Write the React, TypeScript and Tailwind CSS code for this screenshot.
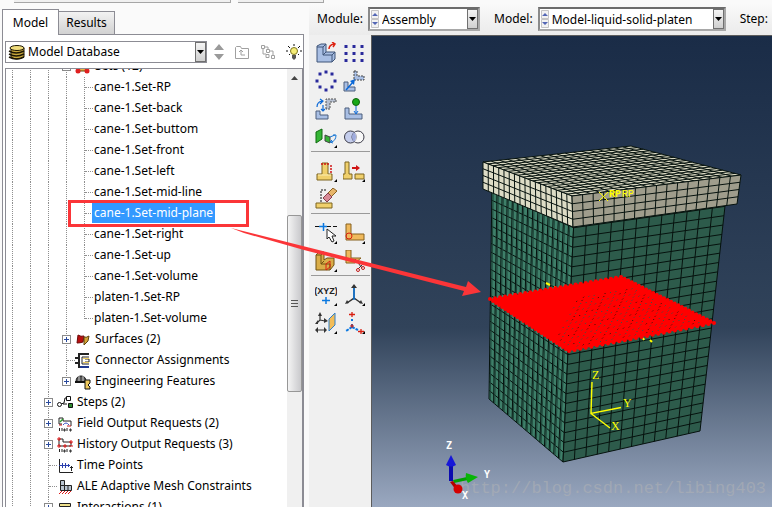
import { useState, type ReactNode } from 'react';

type Point = [number, number];
type Quad = [Point, Point, Point, Point];

const sets = [
  'cane-1.Set-RP',
  'cane-1.Set-back',
  'cane-1.Set-buttom',
  'cane-1.Set-front',
  'cane-1.Set-left',
  'cane-1.Set-mid-line',
  'cane-1.Set-mid-plane',
  'cane-1.Set-right',
  'cane-1.Set-up',
  'cane-1.Set-volume',
  'platen-1.Set-RP',
  'platen-1.Set-volume',
];

const lerp = (a: Point, b: Point, t: number): Point => [a[0] + (b[0] - a[0]) * t, a[1] + (b[1] - a[1]) * t];

// corners run: top-left, top-right, bottom-right, bottom-left
const meshPath = ([a, b, c, d]: Quad, cols: number, rows: number) => {
  let path = '';
  for (let i = 0; i <= cols; i++) {
    path += `M${lerp(a, b, i / cols)}L${lerp(d, c, i / cols)}`;
  }
  for (let j = 0; j <= rows; j++) {
    path += `M${lerp(a, d, j / rows)}L${lerp(b, c, j / rows)}`;
  }
  return path;
};

const Mesh = ({ quad, cols, rows, fill, line = 1 }: { quad: Quad; cols: number; rows: number; fill: string; line?: number }) => (
  <g>
    <polygon points={quad.join(' ')} fill={fill} />
    <path d={meshPath(quad, cols, rows)} stroke="#06120e" strokeWidth={line} fill="none" />
  </g>
);

const body: { left: Quad; right: Quad } = {
  left: [[492, 183], [574, 218], [563, 462], [489, 399]],
  right: [[574, 218], [726, 197], [700, 431], [563, 462]],
};

const lid: { top: Quad; left: Quad; right: Quad } = {
  top: [[483, 162], [631, 146], [741, 175], [572, 196]],
  left: [[483, 162], [572, 196], [573, 227], [483, 189]],
  right: [[572, 196], [741, 175], [737, 204], [573, 227]],
};

const plane: Quad = [[490, 299], [621, 277], [714, 323], [569, 351]];

const planeEdge = plane.flatMap((p, side) => {
  const next = plane[(side + 1) % 4];
  return Array.from({ length: 26 }, (_, i) => lerp(p, next, i / 26));
});

// gaps between the node markers, seen only near the front corner
const planeGaps: Point[] = [];
for (let i = 1; i < 24; i++) {
  for (let j = 5; j < 22; j++) {
    if (i + j > 17 && (i * 7 + j * 5) % 4 !== 0) {
      planeGaps.push(lerp(lerp(plane[0], plane[1], i / 25), lerp(plane[3], plane[2], i / 25), j / 22));
    }
  }
}

const Viewport = () => (
  <svg viewBox="372 36 400 471" preserveAspectRatio="xMinYMin slice" className="h-full w-full" role="img" aria-label="Assembly viewport">
    <Mesh quad={body.left} cols={16} rows={25} fill="#3e7f69" />
    <path
      d={Array.from({ length: 16 }, (_, i) => {
        const t = (i + 0.25) / 16;
        return `M${lerp(body.left[0], body.left[1], t)}L${lerp(body.left[3], body.left[2], t)}`;
      }).join('')}
      stroke="#1d4338"
      strokeWidth="1"
    />
    <Mesh quad={body.right} cols={12} rows={25} fill="#2d5b4b" />
    <Mesh quad={lid.top} cols={18} rows={18} fill="#d9d8c2" />
    <Mesh quad={lid.left} cols={17} rows={4} fill="#dddcc6" />
    <Mesh quad={lid.right} cols={16} rows={4} fill="#9f9d8c" />

    <g stroke="#ffff00" fill="none">
      <path d="M599 192l9 9M599 201l9-9" />
      <path d="M546 283l4 2M554 287h2M643 338l1 2M650 340l2 2" strokeWidth="2" />
    </g>
    <g fill="#ffff00" fontSize="10" fontFamily="'Liberation Mono', monospace">
      <text x="609" y="197" fontWeight="bold">RP</text>
      <text x="622" y="197">RP</text>
    </g>

    <polygon points={plane.join(' ')} fill="#ff0000" />
    {planeEdge.map(([x, y], i) => (
      <circle key={i} cx={x} cy={y} r="2" fill="#ff0000" />
    ))}
    {planeGaps.map(([x, y], i) => (
      <path key={i} d={`M${x} ${y}l1-1`} stroke={i % 3 ? '#2d5b4b' : '#3a1408'} strokeWidth="1" />
    ))}

    <g stroke="#ffff00" strokeWidth="1.4" fill="none">
      <path d="M592 382L591 413.500L621 407.500M591 413.500L610 428" />
    </g>
    <g fill="#ffff00" fontSize="12" fontFamily="'Liberation Serif', serif">
      <text x="592" y="379">Z</text>
      <text x="623" y="407">Y</text>
      <text x="611" y="430">X</text>
    </g>

    <text x="460" y="493" fontSize="17" fontFamily="'Liberation Mono', monospace" fill="#b4b4b4" fillOpacity="0.5">
      http://blog.csdn.net/libing403
    </text>

    <path d="M449 465h4v16h-4z" fill="#0b0bb0" />
    <path d="M451 455l5 10q-5 3-10 0z" fill="#1717d8" />
    <path d="M453 480l14-3 1 3-14 3z" fill="#00a000" />
    <path d="M466 473l12 4-10 6q-3-5-2-10z" fill="#07b507" />
    <path d="M450 482l3-1 6 7-3 2z" fill="#b00000" />
    <circle cx="458" cy="489" r="4.500" fill="#d40000" />
    <g fill="#ffffff" fontSize="10" fontWeight="bold" fontFamily="'DejaVu Sans Mono', monospace">
      <text x="446" y="449">Z</text>
      <text x="484" y="478">Y</text>
      <text x="462" y="499">X</text>
    </g>
  </svg>
);

const Icon = ({ size = 22, children }: { size?: number; children: ReactNode }) => (
  <svg width={size} height={size} viewBox={`0 0 ${size} ${size}`} fill="none" aria-hidden="true">
    {children}
  </svg>
);

const Corner = () => <path d="M22 19v3h-3z" fill="#000" />;

const blue = '#a9bfe4';
const sand = '#f0d06c';

const tools = [
  [
    {
      name: 'Create Instance',
      art: (
        <>
          <path d="M2 4l4-2h5v8h9v7l-3 3H2z" fill={blue} stroke="#3f5578" />
          <path d="M2 5h6v8h9v7M8 13l3-3M17 13l3-3M8 5l3-3" stroke="#3f5578" />
          <path d="M14 7q0-4 5-5M17 0l3 2-2 3" stroke="#dd2211" strokeWidth="1.500" />
        </>
      ),
    },
    {
      name: 'Linear Pattern',
      art: [3, 11, 19].map((x) => [3, 10, 17].map((y) => <rect key={`${x}${y}`} x={x - 1.5} y={y} width="3" height="3" fill="#29299b" />)),
    },
    {
      name: 'Radial Pattern',
      art: [[11, 2], [17, 4], [20, 11], [17, 17], [11, 20], [5, 17], [2, 11], [5, 4]].map(([x, y]) => (
        <rect key={`${x}-${y}`} x={x - 1.5} y={y - 1.5} width="3" height="3" fill="#29299b" />
      )),
    },
    {
      name: 'Translate Instance',
      art: (
        <>
          <path d="M1 12h4v5h7v4H1z" fill={blue} stroke="#4d5f7d" />
          <path d="M11 1h3v5h7v4h-10z" fill={blue} stroke="#444" strokeDasharray="2 1" />
          <path d="M3 20l7-8" stroke="#0a68d8" strokeWidth="1.500" />
          <path d="M12 9l-1 6-4-4z" fill="#0a68d8" />
        </>
      ),
    },
    {
      name: 'Rotate Instance',
      art: (
        <>
          <path d="M1 13h4v4h8v4H1z" fill={blue} stroke="#4d5f7d" />
          <path d="M11 11V1h10v3h-6v7z" fill="#b6bfd0" stroke="#555" strokeDasharray="2 1" />
          <path d="M2 9q0-5 5-6M5 1l3 2-3 3M8 7v6M6 11l2 2 2-2" stroke="#0a68d8" strokeWidth="1.200" />
        </>
      ),
    },
    {
      name: 'Translate To',
      art: (
        <>
          <path d="M2 10h4v6h13v5H2z" fill={blue} stroke="#4d5f7d" />
          <circle cx="13" cy="4" r="3.500" fill="#18a818" stroke="#0c640c" />
          <path d="M13 8v7M11 13l2 3 2-3" stroke="#0a68d8" />
        </>
      ),
    },
    {
      name: 'Constraint',
      art: (
        <>
          <path d="M1 6l6-3v10l-6 4z" fill="#35b535" stroke="#0f6b0f" />
          <path d="M10 9l5 2v6l-5-2z" fill="#35b535" stroke="#444" />
          <path d="M15 11l5-2M18 9h3q0 6-5 7M17 14l-2 2 3 1" stroke="#1474d4" />
          <Corner />
        </>
      ),
    },
    {
      name: 'Merge/Cut Instances',
      art: (
        <>
          <circle cx="7.500" cy="11" r="6" fill="#c4cdec" stroke="#3c3c48" />
          <circle cx="15" cy="11" r="6" fill="#fff" fillOpacity="0.6" stroke="#3c3c48" />
          <path d="M11 6q4 5 0 10-4-5 0-10" fill="#9fabdd" />
        </>
      ),
    },
  ],
  [
    {
      name: 'Create Attachment',
      art: (
        <>
          <path d="M2 14h5V3h6v11h4v6H2z" fill={sand} stroke="#7c6420" />
          <path d="M3 15h13" stroke="#fbeeb4" />
          <path d="M6 4h8M16 5v9" stroke="#d01414" strokeWidth="1.500" strokeDasharray="2 1" />
          <Corner />
        </>
      ),
    },
    {
      name: 'Suppress Feature',
      art: (
        <>
          <path d="M2 14V2h4v12h3v5H0v-5z" fill={sand} stroke="#7c6420" />
          <path d="M12 14h9v5h-9z" fill={sand} stroke="#7c6420" />
          <path d="M9 8h5" stroke="#d01414" strokeWidth="2" />
          <path d="M13 5l4 3-4 3z" fill="#d01414" />
          <Corner />
        </>
      ),
    },
    {
      name: 'Delete Feature',
      art: (
        <>
          <path d="M1 15h16v5H1z" fill={sand} stroke="#7c6420" />
          <path d="M6 14V2h5" stroke="#111" strokeDasharray="2 1" />
          <path d="M13 5l5-5 4 3-6 6z" fill="#e8b66a" stroke="#8b6222" />
          <path d="M8 10l5-5 4 4-5 5z" fill="#d88a96" stroke="#84404c" />
        </>
      ),
    },
  ],
  [
    {
      name: 'Create Partition: Edge',
      art: (
        <>
          <path d="M0 4.500h22" stroke="#111" strokeDasharray="4 2" />
          <path d="M8.500 1v8M4 4.500h8" stroke="#0a78e0" strokeWidth="1.500" />
          <path d="M12 7v10l2-2 3 5 2-1-2-5h4z" fill="#fff" stroke="#222" />
          <Corner />
        </>
      ),
    },
    {
      name: 'Partition Cell',
      art: (
        <>
          <path d="M3 2h5v10h13v6H3z" fill="#efb95c" stroke="#86601e" />
          <circle cx="6" cy="14" r="3" stroke="#d81e10" />
          <Corner />
        </>
      ),
    },
    {
      name: 'Partition Face',
      art: (
        <>
          <path d="M1 5l3-3h5v8l3-2h7v7l-4 5H1z" fill="#d9ad48" stroke="#6f5010" />
          <path d="M1 5h5v9h9v6M6 5l3-3M6 14l3-3" stroke="#6f5010" />
          <path d="M11 14l4-3v6l-4 3z" stroke="#d81e10" />
          <Corner />
        </>
      ),
    },
    {
      name: 'Remove Face',
      art: (
        <>
          <path d="M3 0h5v8h10l-6 5H3z" fill="#efb95c" stroke="#86601e" />
          <path d="M12 9l7 9M21 13l-6 6" stroke="#333" />
          <circle cx="15" cy="20" r="1.500" stroke="#c01818" />
          <circle cx="20" cy="18" r="1.500" stroke="#c01818" />
        </>
      ),
    },
  ],
  [
    {
      name: 'Create Datum Point',
      art: (
        <>
          <text x="11" y="10" textAnchor="middle" fontSize="9" fontWeight="bold" fontFamily="'Liberation Sans', sans-serif" fill="#222">
            (XYZ)
          </text>
          <path d="M11 13v7M7 16.500h8" stroke="#0a78e0" strokeWidth="1.500" />
          <Corner />
        </>
      ),
    },
    {
      name: 'Create Datum CSYS',
      art: (
        <>
          <path d="M11 3v11l-7 5M11 14l7 5" stroke="#333" strokeWidth="1.500" />
          <path d="M11 2v14" stroke="#0a78e0" strokeWidth="1.500" />
          <path d="M8 4l3-4 3 4zM2 20l2-4 2 3zM20 20l-2-4-2 3z" fill="#333" />
          <Corner />
        </>
      ),
    },
    {
      name: 'Create Datum Plane',
      art: (
        <>
          <path d="M14 7l6-6v12l-6 6z" fill="#f3bd58" stroke="#2f7fc8" />
          <path d="M5 3v5l-3 3M5 8l5 1M2 18h8" stroke="#333" strokeWidth="1.200" />
          <path d="M3 4l2-4 2 4zM3 8v4H0zM9 6l4 3-4 2zM3 15v6l-3-3zM9 15v6l3-3z" fill="#333" />
          <Corner />
        </>
      ),
    },
    {
      name: 'Create Reference Point',
      art: (
        <>
          <path d="M6 2.500h6M9 0v5M15 19.500h6M18 17v5" stroke="#d81e10" strokeWidth="1.300" />
          <path d="M9 7v2M9 12v3M9 15l-6 4M9 15l6 3" stroke="#0a78e0" strokeWidth="2" strokeDasharray="3 1" />
          <path d="M7 14h4M9 12v4" stroke="#d81e10" />
          <Corner />
        </>
      ),
    },
  ],
];

const Toolbox = () => (
  <div className="w-[62px] shrink-0 bg-[#f0f0f0] pt-[4px]">
    {tools.map((group, i) => (
      <div key={i} className="mr-px mb-[5px] ml-[2px] border-b border-[#9a9a9a] last:border-0">
        <div className="grid grid-cols-[28px_28px] pl-[1px]">
          {group.map((tool) => (
            <button key={tool.name} type="button" aria-label={tool.name} className="flex h-[28px] w-[28px] items-center justify-center">
              <Icon>{tool.art}</Icon>
            </button>
          ))}
        </div>
      </div>
    ))}
  </div>
);

const SelectArrow = () => (
  <span className="pointer-events-none flex w-[11px] items-center justify-center border border-[#707070] bg-gradient-to-b from-[#f4f4f4] to-[#cfcfcf]">
    <svg width="7" height="4" viewBox="0 0 7 4" aria-hidden="true">
      <path d="M0 0h7L3.500 4z" fill="#000" />
    </svg>
  </span>
);

const ToolbarSelect = ({ label, value, width }: { label: string; value: string; width: string }) => (
  <label className="flex shrink-0 items-center gap-[5px]">
    {label}
    <span className={`flex h-[24px] border-2 border-[#a8a8a8] border-t-[#6c6c6c] border-l-[#8a8a8a] bg-white ${width}`}>
      <svg width="10" height="20" viewBox="0 0 10 20" className="shrink-0" aria-hidden="true">
        <path d="M1.500 1.500h7v8h-7zM1.500 10.500h7v8h-7z" fill="#f2f2f2" stroke="#c4c4c4" />
        <path d="M2 7h6L5 4zM2 13h6l-3 3z" fill="#5366b4" />
      </svg>
      <select className="min-w-0 flex-1 appearance-none bg-transparent pl-[2px] leading-[19px] outline-none">
        <option>{value}</option>
      </select>
      <SelectArrow />
    </span>
  </label>
);

const Guide = () => (
  <span className="flex w-[18px] shrink-0 justify-center">
    <span className="border-l border-dotted border-[#8f8f8f]" />
  </span>
);

type RowProps = {
  depth: number;
  label: string;
  icon?: ReactNode;
  expandable?: boolean;
  last?: boolean;
  selected?: boolean;
  onSelect?: () => void;
};

const TreeRow = ({ depth, label, icon, expandable, last, selected, onSelect }: RowProps) => (
  <li className="flex h-[21px] pr-[2px]" role="treeitem" aria-selected={!!selected}>
    {Array.from({ length: depth }, (_, i) => (
      <Guide key={i} />
    ))}
    <span className="grid w-[18px] shrink-0 grid-cols-1 grid-rows-1">
      <span className={`w-px justify-self-center border-l border-dotted border-[#8f8f8f] [grid-area:1/1] ${last ? 'h-[11px]' : ''}`} />
      {expandable ? (
        <button
          type="button"
          aria-label={`Expand ${label}`}
          className="h-[9px] w-[9px] self-center justify-self-center border border-[#8a8a8a] bg-white [grid-area:1/1]"
        >
          <svg width="7" height="7" viewBox="0 0 7 7" className="block" aria-hidden="true">
            <path d="M1 3.500h5M3.500 1v5" stroke="#2a4a9c" />
          </svg>
        </button>
      ) : (
        <span className="w-[8px] self-center justify-self-end border-t border-dotted border-[#8f8f8f] [grid-area:1/1]" />
      )}
    </span>
    {icon && <span className="flex w-[18px] shrink-0 items-center justify-start">{icon}</span>}
    <button
      type="button"
      onClick={onSelect}
      className={`h-[20px] whitespace-nowrap px-[2px] leading-[20px] ${icon ? '' : '-ml-px'} ${selected ? 'bg-[#3399ff] text-white' : ''}`}
    >
      {label}
    </button>
  </li>
);

const setsIcon = (
  <Icon size={16}>
    <path d="M3 4h9v8H3z" fill="#e8b848" stroke="#604010" />
    <circle cx="3" cy="12" r="2.500" fill="#e02020" />
    <circle cx="12" cy="12" r="2.500" fill="#e02020" />
  </Icon>
);

const surfacesIcon = (
  <Icon size={16}>
    <path d="M3 3q3 2 6 1l-1 6q-3 1-6 1z" fill="#b80f0f" stroke="#6c0808" />
    <path d="M9 5q2 1 5-1l-1 5-4 4z" fill="#d3a336" stroke="#5c4210" />
  </Icon>
);

const connectorIcon = (
  <Icon size={16}>
    <path d="M14 1H4v13h10M0 5h4M0 10h4" stroke="#222" strokeWidth="2" />
    <path d="M14 4H7v7h7M10 6h4v3h-4" stroke="#222" />
    <path d="M8 5h6v1H8zM8 9h6v1H8z" fill="#f0cf60" />
    <path d="M5 13h9v2H5z" fill="#21398e" />
  </Icon>
);

const featuresIcon = (
  <Icon size={16}>
    <path d="M1 8q0-6 5-6 5 0 5 6z" fill="#555" stroke="#111" />
    <path d="M4 2v6M8 2v6" stroke="#ccc" />
    <path d="M0 8h11" stroke="#111" strokeWidth="2" />
    <path d="M10 6h5v3l-2 2 2 2v2h-5z" fill="#edc85c" stroke="#111" />
  </Icon>
);

const stepsIcon = (
  <Icon size={16}>
    <path d="M4 9l3-1 1-5h2M6 9h4" stroke="#111" />
    <circle cx="2.500" cy="9.500" r="2" fill="#fff" stroke="#111" />
    <path d="M9.500 1.500h4v4h-4z" fill="#fff" stroke="#111" />
    <path d="M11.500 8.500h4v4h-4z" fill="#2e8b2e" stroke="#111" />
  </Icon>
);

const bits = <path d="M2.500 12v3M5 12v3M10 12v3M7 13h1v2h-1zM13 13h1v2h-1z" stroke="#222" />;

const fieldIcon = (
  <Icon size={16}>
    <path d="M2 2h4v3h8v5M2 2v6h3" stroke="#222" />
    <path d="M3 6l3-3" stroke="#2ea02e" strokeWidth="1.500" />
    <path d="M6 9q3-4 6 0" stroke="#3a55c8" />
    <path d="M2 9h3M10 10h4" stroke="#d01818" />
    {bits}
  </Icon>
);

const historyIcon = (
  <Icon size={16}>
    <path d="M2 2v7h12M2 2h4v3h8v4" stroke="#222" />
    <path d="M0 2h4M2 0v4M12 5h4M14 3v4M0 9h4M2 7v4M6 9h4M8 7v4M12 9h4" stroke="#e01818" />
    {bits}
  </Icon>
);

const timeIcon = (
  <Icon size={16}>
    <path d="M2.500 1v13.500H16" stroke="#222" />
    <path d="M2 7.500h11M5.500 5v5M8.500 5v5M11.500 6v3" stroke="#2a3fae" />
    <path d="M14.500 8v5M13 9.500h3" stroke="#222" />
  </Icon>
);

const aleIcon = (
  <Icon size={16}>
    <path d="M3.500 1.500h4v5h7v5h-11z" fill="#b9c4d0" stroke="#222" />
    <path d="M3.500 6.500h4v5M11 6.500v5" stroke="#222" />
    <path d="M2 15l3-3M5 15l3-3M8 15l3-3M11 15l3-3" stroke="#e01818" />
  </Icon>
);

const interactionsIcon = (
  <Icon size={16}>
    <path d="M2.500 3.500h11v3h-11z" fill="#efe08c" stroke="#222" />
    <path d="M5 7v6M11 7v6M3 10h4M9 10h4" stroke="#1e9a3c" strokeWidth="1.500" />
  </Icon>
);

const ModelTree = () => {
  const [selected, setSelected] = useState('cane-1.Set-mid-plane');

  return (
    <div className="ml-[2px] flex min-h-0 flex-1 overflow-hidden border border-b-0 border-[#8c8c94]">
      <ul role="tree" aria-label="Model tree" className="-mt-[13px] -ml-[3px] min-w-0 flex-1">
        <TreeRow depth={3} label="Sets (12)" icon={setsIcon} expandable />
        {sets.map((name, i) => (
          <TreeRow
            key={name}
            depth={4}
            label={name}
            last={i === sets.length - 1}
            selected={name === selected}
            onSelect={() => setSelected(name)}
          />
        ))}
        <TreeRow depth={3} label="Surfaces (2)" icon={surfacesIcon} expandable />
        <TreeRow depth={3} label="Connector Assignments" icon={connectorIcon} />
        <TreeRow depth={3} label="Engineering Features" icon={featuresIcon} expandable last />
        <TreeRow depth={2} label="Steps (2)" icon={stepsIcon} expandable />
        <TreeRow depth={2} label="Field Output Requests (2)" icon={fieldIcon} expandable />
        <TreeRow depth={2} label="History Output Requests (3)" icon={historyIcon} expandable />
        <TreeRow depth={2} label="Time Points" icon={timeIcon} />
        <TreeRow depth={2} label="ALE Adaptive Mesh Constraints" icon={aleIcon} />
        <TreeRow depth={2} label="Interactions (1)" icon={interactionsIcon} expandable />
      </ul>
      <div className="flex w-[15px] shrink-0 flex-col bg-[#f0f0f0]">
        <div className="flex h-[146px] justify-center pt-[7px]">
          <svg width="7" height="4" viewBox="0 0 7 4" aria-hidden="true">
            <path d="M0 4h7L3.500 0z" fill="#444" />
          </svg>
        </div>
        <div className="flex h-[177px] flex-col items-center justify-center gap-[2px] rounded-xs border border-[#979797] bg-gradient-to-r from-[#f4f4f4] to-[#c9c9cc]">
          <span className="h-px w-[7px] bg-[#555]" />
          <span className="h-px w-[7px] bg-[#555]" />
          <span className="h-px w-[7px] bg-[#555]" />
        </div>
      </div>
    </div>
  );
};

const ModelPanel = () => (
  <aside className="flex w-[309px] shrink-0 flex-col pt-[6px] pr-[5px] pl-[2px]">
    <div role="tablist" className="flex h-[25px] items-end">
      <button
        type="button"
        role="tab"
        aria-selected="true"
        className="z-10 -mb-px h-[26px] w-[57px] border border-b-0 border-[#8c8c94] bg-white"
      >
        Model
      </button>
      <button
        type="button"
        role="tab"
        aria-selected="false"
        className="h-[23px] w-[56px] border border-b-0 border-l-0 border-[#8c8c94] bg-gradient-to-b from-[#f2f2f2] to-[#d2d2d2]"
      >
        Results
      </button>
    </div>
    <div className="flex min-h-0 flex-1 flex-col border border-b-0 border-[#8c8c94] bg-white">
      <div className="flex h-[33px] shrink-0 items-center pl-[2px]">
        <div className="flex h-[22px] w-[202px] border border-[#8c8c94] bg-white">
          <svg width="18" height="16" viewBox="0 0 18 16" className="ml-[2px] self-center" aria-hidden="true">
            <path d="M3 4v9q6 4 13 0V4z" fill="#caa93c" stroke="#1c1604" />
            <ellipse cx="9" cy="4" rx="7" ry="2.500" fill="#f0dc7c" stroke="#1c1604" />
            <path d="M1 7q7 4 15 0M1 10q7 4 15 0M1 13q7 4 15 0" stroke="#1c1604" strokeWidth="1.500" fill="none" />
          </svg>
          <select aria-label="Database" className="min-w-0 flex-1 appearance-none bg-transparent pl-[2px] outline-none">
            <option>Model Database</option>
          </select>
          <SelectArrow />
        </div>
        <div className="flex flex-1 items-center justify-between pr-px pl-[7px]">
          <button type="button" aria-label="Move up or down">
            <svg width="10" height="16" viewBox="0 0 10 16" aria-hidden="true">
              <path d="M0 6h10L5 0zM0 10h10l-5 6z" fill="#9a9a9a" />
            </svg>
          </button>
          <button type="button" aria-label="Up one level">
            <Icon size={16}>
              <path d="M1.500 14.500v-11l1-1h4l1 2h7v10z" stroke="#a0a0a0" />
              <path d="M11 11H7V6M5 8l2-2 2 2" stroke="#a0a0a0" />
            </Icon>
          </button>
          <button type="button" aria-label="Show parents">
            <Icon size={16}>
              <path d="M1.500 1.500h3v3h-3zM6.500 5.500h3v3h-3zM11.500 11.500h3v3h-3z M5 3h3v2M10 7h3v4M3 5v5h3M6 10.500h3v3h-3z" stroke="#a0a0a0" />
            </Icon>
          </button>
          <button type="button" aria-label="Tips">
            <Icon size={16}>
              <path d="M8 0v2M2 2l2 2M14 2l-2 2M0 7h2M14 7h2M3 11l1-1M13 11l-1-1" stroke="#111" />
              <circle cx="8" cy="7" r="3.500" fill="#f6ee78" stroke="#7c7420" />
              <path d="M6 11h4v3l-2 2-2-2z" fill="#555" />
            </Icon>
          </button>
        </div>
      </div>
      <ModelTree />
    </div>
  </aside>
);

// highlight box and pointer drawn over the window
const Annotation = () => (
  <svg width="490" height="310" viewBox="0 0 490 310" className="pointer-events-none absolute top-0 left-0 z-20" aria-hidden="true">
    <path d="M69.500 201.500h178v24h-178z" fill="none" stroke="#fb3538" strokeWidth="3" />
    <path d="M231 228L466 287l2-6 13 11-19 4 2-5-160-41-60-17z" fill="#fb3538" />
  </svg>
);

export default function App() {
  return (
    <div className="relative flex h-screen flex-col overflow-hidden bg-[#fafafa] font-['Noto_Sans','Noto_Sans_CJK_SC',sans-serif] text-[12px] leading-[16px] text-black">
      <div className="flex h-[3px] shrink-0 gap-[7px] pl-[14px]">
        <div className="w-[217px] border-r border-b border-[#a6a6a6] bg-[#f0f0f0]" />
        <div className="w-[86px] border-r border-b border-[#a6a6a6] bg-[#f0f0f0]" />
      </div>
      <div className="flex min-h-0 flex-1">
        <ModelPanel />
        <main className="flex min-w-0 flex-1 flex-col">
          <div className="flex h-[32px] shrink-0 items-center gap-[14px] overflow-hidden bg-gradient-to-b from-[#fafafa] to-[#ebebeb] pl-[8px]">
            <ToolbarSelect label="Module:" value="Assembly" width="w-[112px]" />
            <ToolbarSelect label="Model:" value="Model-liquid-solid-platen" width="w-[188px]" />
            <ToolbarSelect label="Step:" value="Initial" width="w-[112px]" />
          </div>
          <div className="flex min-h-0 flex-1">
            <Toolbox />
            <div className="min-w-0 flex-1 overflow-hidden border-t border-l border-[#5c5c5c] bg-linear-[180deg,#1a2c47_0%,#31435a_62%,#9aa8c0_100%]">
              <Viewport />
            </div>
          </div>
        </main>
      </div>
      <Annotation />
    </div>
  );
}
